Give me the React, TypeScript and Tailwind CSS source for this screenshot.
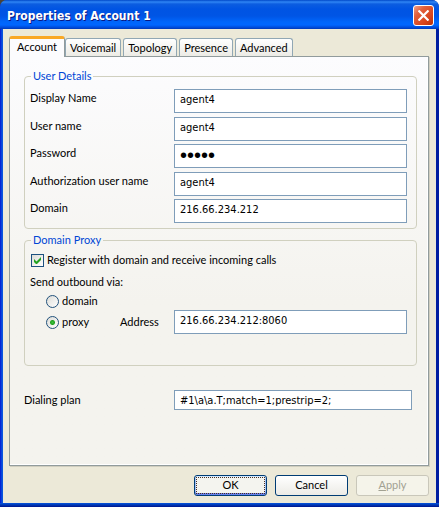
import { useState } from "react";
import type { ReactNode } from "react";

const tabs = ["Account", "Voicemail", "Topology", "Presence", "Advanced"];

const details = [
  { id: "display", label: "Display Name", value: "agent4", type: "text" },
  { id: "user", label: "User name", value: "agent4", type: "text" },
  { id: "password", label: "Password", value: "agent", type: "password" },
  { id: "auth", label: "Authorization user name", value: "agent4", type: "text" },
  { id: "domain", label: "Domain", value: "216.66.234.212", type: "text" },
];

const field = "min-w-0 border border-[#7f9db9] bg-white pl-[5px] text-black outline-none";
const fieldText = "font-['DejaVu_Sans_Condensed','DejaVu_Sans',sans-serif] text-[11px]";
const secretText = "font-['Liberation_Sans',sans-serif] text-[20px] leading-5";

function TitleBar() {
  return (
    <header className="flex h-[29px] items-center justify-between rounded-t-[7px] bg-[linear-gradient(180deg,#0048c8_0px,#2f86f5_2px,#0c5de0_4px,#0054e3_9px,#0055e5_16px,#0066fb_22px,#0066ff_25px,#0045d0_28px,#0038b4_29px)] pr-[5px] pl-[7px]">
      <h1 className="pt-[2px] font-['DejaVu_Sans_Condensed','DejaVu_Sans',sans-serif] text-[12px] leading-4 font-bold text-white [text-shadow:1px_1px_0_#0a1883]">
        Properties of Account 1
      </h1>
      <button
        type="button"
        aria-label="Close"
        className="mt-[2px] flex size-[21px] items-center justify-center rounded-[3px] border border-white bg-[linear-gradient(135deg,#f0a088_0%,#e2603c_30%,#d8441c_70%,#b83008_100%)]"
      >
        <svg viewBox="0 0 11 11" className="size-[11px]" stroke="#fff" strokeWidth="2.2">
          <path d="M0.5 0.5 10.5 10.5M10.5 0.5 0.5 10.5" />
        </svg>
      </button>
    </header>
  );
}

function TabStrip({ active, onSelect }: { active: string; onSelect: (t: string) => void }) {
  return (
    <div role="tablist" className="flex h-5 items-end gap-[2px]">
      {tabs.map((t) =>
        t === active ? (
          <button
            key={t}
            type="button"
            role="tab"
            aria-selected="true"
            onClick={() => onSelect(t)}
            className="relative z-10 -mr-[2px] -mb-px h-[21px] rounded-t-[3px] border-x border-t-[3px] border-x-[#919b9c] border-t-[#f9a825] bg-[#fcfcfe] px-[7px] pb-[2px] leading-4"
          >
            {t}
          </button>
        ) : (
          <button
            key={t}
            type="button"
            role="tab"
            aria-selected="false"
            onClick={() => onSelect(t)}
            className="h-[18px] rounded-t-[3px] border border-b-0 border-[#91a7b4] bg-linear-to-b from-white to-[#ecebe5] px-1 pt-px leading-4"
          >
            {t}
          </button>
        ),
      )}
    </div>
  );
}

function Group({ title, children }: { title: string; children: ReactNode }) {
  return (
    <fieldset className="min-w-0 rounded-[4px] border border-[#d0d0bf] pr-[9px] pl-[5px]">
      <legend className="ml-px px-[2px] leading-4 text-[#0046d5]">{title}</legend>
      {children}
    </fieldset>
  );
}

function Radio({ label, checked, onChange }: { label: string; checked: boolean; onChange: () => void }) {
  return (
    <label className="flex items-center gap-[3px] leading-4">
      <input
        type="radio"
        name="outbound"
        checked={checked}
        onChange={onChange}
        className="size-[13px] appearance-none rounded-full border border-[#21517b] bg-[linear-gradient(135deg,#dcdcd7,#fff)] checked:bg-[radial-gradient(circle,#3fc43f_0px,#21a121_2px,#ffffff00_3px),linear-gradient(135deg,#dcdcd7,#fff)]"
      />
      {label}
    </label>
  );
}

export default function App() {
  const [active, setActive] = useState("Account");
  const [register, setRegister] = useState(true);
  const [via, setVia] = useState("proxy");

  return (
    <div className="bg-[linear-gradient(90deg,#4a4438_50%,#fff_50%)]">
      <div className="flex min-h-screen flex-col rounded-t-[7px] bg-[linear-gradient(90deg,#0019cf_0px,#0831d9_1px,#0855dd_2px,#0855dd_50%,#001ea0_50%)] font-['Lato',sans-serif] text-[11px] text-black [font-variant-ligatures:none]">
        <TitleBar />
        <form
          onSubmit={(e) => e.preventDefault()}
          className="mx-[3px] flex flex-1 flex-col bg-[#ece9d8] px-[6px] pt-[7px] pb-[7px]"
        >
          <TabStrip active={active} onSelect={setActive} />
          <section
            role="tabpanel"
            aria-label={active}
            className="mr-px flex flex-1 flex-col border border-[#919b9c] bg-linear-to-b from-[#fcfcfe] to-[#f4f3ee] to-60% pt-[11px] pr-[11px] pl-[14px] shadow-[1px_1px_0_#d0cebf,inset_-1px_-1px_0_#fff]"
          >
            <Group title="User Details">
              <div className="pt-[5px] pb-px">
                {details.map((d) => (
                  <div key={d.id} className="flex items-start odd:h-7 even:h-[27px]">
                    <label htmlFor={d.id} className="w-36 shrink-0 leading-[18px]">
                      {d.label}
                    </label>
                    <input
                      id={d.id}
                      type={d.type}
                      defaultValue={d.value}
                      className={`${field} h-6 flex-1 ${d.type === "password" ? `${secretText} pb-[2px]` : `${fieldText} pb-[3px]`}`}
                    />
                  </div>
                ))}
              </div>
            </Group>

            <div className="mt-[3px]">
              <Group title="Domain Proxy">
                <div className="pt-1 pb-[31px]">
                  <label className="flex w-fit items-center gap-[3px] pl-px leading-4">
                    <span className="grid size-[13px] place-items-center">
                      <input
                        type="checkbox"
                        checked={register}
                        onChange={(e) => setRegister(e.target.checked)}
                        className="col-start-1 row-start-1 size-[13px] appearance-none border border-[#1c5180] bg-[linear-gradient(135deg,#dcdcd7,#fff)]"
                      />
                      {register && (
                        <svg
                          viewBox="0 0 7 7"
                          className="pointer-events-none col-start-1 row-start-1 size-[7px]"
                          fill="#21a121"
                        >
                          <path d="M0 2v3l2 2h1l4-4V0L2.500 4.500z" />
                        </svg>
                      )}
                    </span>
                    Register with domain and receive incoming calls
                  </label>
                  <div className="pt-[6px] leading-4">Send outbound via:</div>
                  <div className="flex items-start">
                    <div className="flex w-[90px] shrink-0 flex-col gap-[5px] pt-[3px] pl-4">
                      <Radio label="domain" checked={via === "domain"} onChange={() => setVia("domain")} />
                      <Radio label="proxy" checked={via === "proxy"} onChange={() => setVia("proxy")} />
                    </div>
                    <label htmlFor="address" className="w-[54px] shrink-0 pt-6 leading-4">
                      Address
                    </label>
                    <input
                      id="address"
                      defaultValue="216.66.234.212:8060"
                      className={`${field} ${fieldText} mt-5 h-6 flex-1 pb-[3px]`}
                    />
                  </div>
                </div>
              </Group>
            </div>

            <div className="flex items-center pt-6 pr-[5px]">
              <label htmlFor="dialing" className="w-[150px] shrink-0 leading-4">
                Dialing plan
              </label>
              <input
                id="dialing"
                defaultValue="#1\a\a.T;match=1;prestrip=2;"
                className={`${field} ${fieldText} h-5 flex-1`}
              />
            </div>
          </section>

          <div className="flex justify-end gap-2 pt-[9px] pr-px">
            <button
              type="submit"
              className="h-[21px] w-[73px] rounded-[3px] border border-[#003c74] bg-[#f4f4ef] p-px shadow-[inset_0_1px_0_#cee7ff,inset_0_-2px_0_#6982ee,inset_1px_0_0_#a8c4f5,inset_-1px_0_0_#a8c4f5]"
            >
              <span className="flex h-full items-center justify-center border border-dotted border-[#4a3020]">OK</span>
            </button>
            <button
              type="button"
              className="h-[21px] w-[73px] rounded-[3px] border border-[#003c74] bg-linear-to-b from-white to-[#ecebe6]"
            >
              Cancel
            </button>
            <button
              type="button"
              disabled
              className="h-[21px] w-[73px] rounded-[3px] border border-[#c9c7ba] bg-[#f5f4ea] text-[#a1a192]"
            >
              <span className="underline">A</span>pply
            </button>
          </div>
        </form>
        <div className="h-1 bg-linear-to-b from-[#0855dd] to-[#00138c]" />
      </div>
    </div>
  );
}
